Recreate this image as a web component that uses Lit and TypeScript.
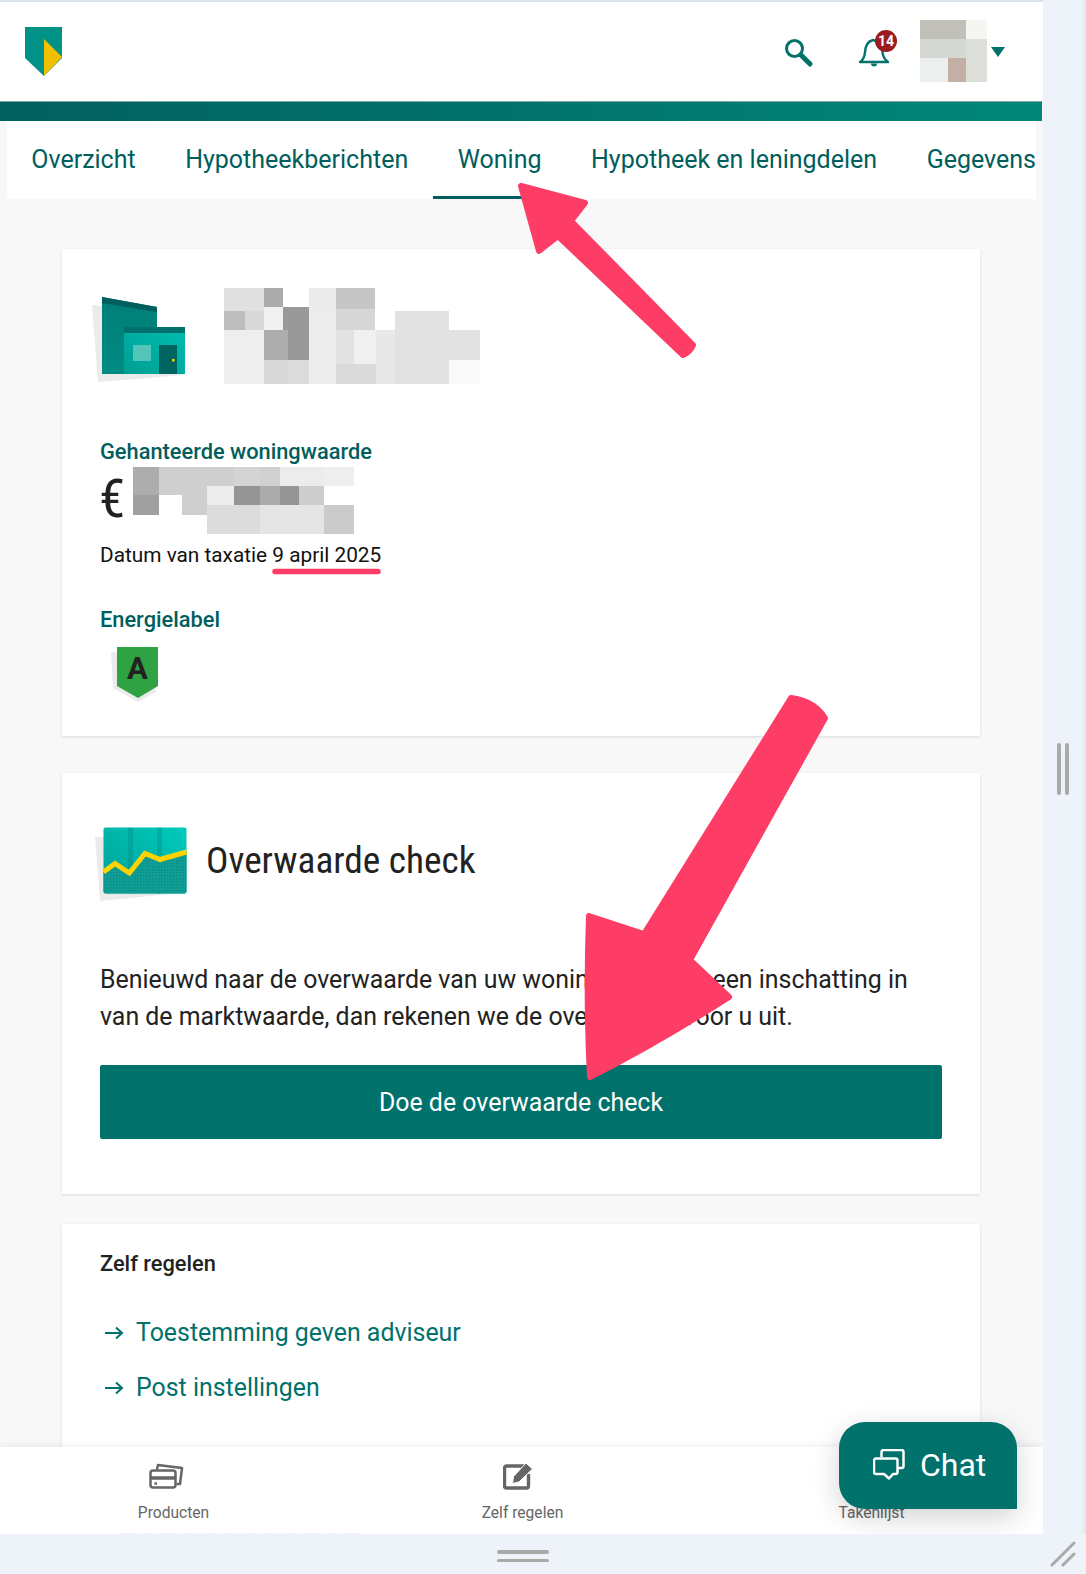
import { LitElement, html, svg, css } from 'lit';
import { customElement } from 'lit/decorators.js';

type Block = [number, number, number, number, string];

const NAME_BLOCKS: Block[] = [
  [0, 0, 40, 23, '#e0e0e0'], [40, 0, 19, 19, '#ababab'], [85, 0, 27, 23, '#ebebeb'], [112, 0, 39, 21, '#c6c6c6'],
  [0, 23, 21, 19, '#bdbdbd'], [21, 23, 19, 19, '#d8d8d8'], [40, 19, 19, 23, '#f0f0f0'], [59, 19, 26, 23, '#999999'],
  [85, 23, 27, 96, '#ededed'], [112, 21, 39, 21, '#d6d6d6'], [171, 23, 54, 19, '#e2e2e2'],
  [0, 42, 40, 54, '#eeeeee'], [40, 42, 24, 30, '#adadad'], [64, 42, 21, 30, '#999999'],
  [112, 42, 18, 34, '#e2e2e2'], [130, 42, 22, 34, '#f0f0f0'], [152, 42, 19, 54, '#e8e8e8'],
  [171, 42, 54, 54, '#e2e2e2'], [225, 42, 31, 30, '#e2e2e2'], [225, 72, 31, 24, '#fafafa'],
  [40, 72, 24, 24, '#d8d8d8'], [64, 72, 21, 24, '#dcdcdc'], [112, 76, 40, 20, '#dadada'],
];

const AMOUNT_BLOCKS: Block[] = [
  [0, 0, 26, 28, '#adadad'], [0, 28, 26, 20, '#a0a0a0'], [26, 0, 75, 19, '#cfcfcf'], [101, 0, 26, 19, '#d4d4d4'],
  [127, 0, 20, 19, '#d0d0d0'], [147, 0, 44, 19, '#ececec'], [191, 0, 30, 19, '#efefef'],
  [26, 19, 48, 9, '#cfcfcf'], [49, 28, 25, 20, '#cfcfcf'],
  [74, 19, 27, 19, '#ececec'], [101, 19, 26, 19, '#959595'], [127, 19, 20, 19, '#ababab'],
  [147, 19, 19, 19, '#959595'], [166, 19, 25, 19, '#cdcdcd'],
  [74, 38, 53, 29, '#dcdcdc'], [127, 38, 64, 29, '#e5e5e5'], [191, 38, 30, 29, '#cbcbcb'],
];

const AVATAR_BLOCKS: Block[] = [
  [0, 0, 46, 19, '#c1c0b8'], [46, 0, 21, 19, '#f5f5f2'], [0, 19, 46, 19, '#d5d8d2'], [46, 19, 21, 43, '#dcdfd7'],
  [0, 38, 28, 24, '#ebefed'], [28, 38, 18, 24, '#c1b0a3'],
];

const mosaic = (blocks: Block[], w: number, h: number) => html`
  <svg width=${w} height=${h} viewBox="0 0 ${w} ${h}" shape-rendering="crispEdges">
    ${blocks.map(([x, y, bw, bh, fill]) => svg`<rect x=${x} y=${y} width=${bw} height=${bh} fill=${fill}></rect>`)}
  </svg>
`;

const TABS = ['Overzicht', 'Hypotheekberichten', 'Woning', 'Hypotheek en leningdelen', 'Gegevens'];

@customElement('app-root')
export class AppRoot extends LitElement {
  static styles = css`
    :host {
      display: block;
      width: 1086px;
      height: 1574px;
      overflow: hidden;
      background: #edf3f9;
      font-family: Roboto, 'Noto Sans', sans-serif;
      color: #222;
    }
    .window {
      display: flex;
      height: 1534px;
    }
    .page {
      position: relative;
      width: 1043px;
      flex: none;
      display: flex;
      flex-direction: column;
      overflow: hidden;
      background: #f8f8f8;
      border-top: 2px solid #d8e2e9;
      box-sizing: border-box;
    }
    .side {
      flex: 1;
      display: flex;
      justify-content: center;
      align-items: center;
      gap: 4px;
      padding-top: 4px;
      border-right: 3px solid #e0eaf1;
    }
    .side span {
      width: 4px;
      height: 52px;
      border-radius: 2px;
      background: #a9a9a9;
    }
    .bottom {
      position: relative;
      height: 40px;
      display: flex;
      flex-direction: column;
      align-items: center;
      padding: 16px 40px 0 0;
      gap: 5px;
      box-sizing: border-box;
    }
    .bottom span {
      width: 52px;
      height: 3.5px;
      border-radius: 2px;
      background: #a9a9a9;
    }
    .resize {
      position: absolute;
      right: 10px;
      top: 7px;
    }

    header {
      height: 99px;
      flex: none;
      display: flex;
      align-items: center;
      background: #fff;
      padding-left: 25px;
      box-sizing: border-box;
    }
    .tools {
      margin-left: auto;
      display: flex;
      align-items: center;
    }
    .search {
      margin-right: 43px;
      margin-top: 3px;
    }
    .bell {
      position: relative;
      width: 32px;
      height: 30px;
      margin-right: 30px;
      margin-top: 3px;
    }
    .badge {
      position: absolute;
      left: 17px;
      top: -8px;
      width: 22px;
      height: 22px;
      border-radius: 50%;
      background: #9b1c1f;
      color: #fff;
      font-size: 14px;
      font-weight: 700;
      line-height: 22px;
      text-align: center;
    }
    .avatar {
      display: block;
      height: 62px;
      margin-top: -1px;
    }
    .caret {
      margin: 0 38px 0 4px;
    }
    .bar {
      height: 20px;
      flex: none;
      margin-right: 1px;
      background: linear-gradient(95deg, #02605e 0%, #01877a 100%);
      border-top: 1px solid #7fa9a8;
      box-sizing: border-box;
    }
    nav.tabs {
      height: 78px;
      flex: none;
      margin: 0 7px;
      display: flex;
      overflow: hidden;
      background: #fff;
    }
    .tab {
      padding: 0 25px 2px 24.5px;
      height: 78px;
      box-sizing: border-box;
      display: flex;
      align-items: center;
      font-size: 25px;
      white-space: nowrap;
      color: #005e5d;
    }
    .tab:first-child {
      padding-left: 24.25px;
    }
    .tab.active {
      box-shadow: inset 0 -3px 0 #005e5d;
    }
    main {
      flex: 1;
      min-height: 0;
      overflow: hidden;
      padding: 50px 63px 0 62px;
      display: flex;
      flex-direction: column;
    }
    .card {
      flex: none;
      background: #fff;
      box-shadow: 0 1px 3px rgba(0, 0, 0, 0.12);
      padding: 39px 38px 0;
      box-sizing: border-box;
    }
    .home {
      height: 487px;
    }
    .address {
      display: flex;
      margin-left: -8px;
    }
    .label {
      font-size: 21.8px;
      font-weight: 500;
      line-height: 28px;
      color: #005e5d;
    }
    .value-label {
      margin-top: 54px;
    }
    .amount {
      display: flex;
      align-items: flex-start;
      height: 67px;
      margin-top: 1px;
    }
    .euro {
      width: 34px;
      margin-left: -1px;
      font-size: 53px;
      line-height: 64px;
      font-weight: 400;
      font-stretch: 75%;
    }
    .date {
      font-size: 20.8px;
      line-height: 26px;
      margin-top: 8px;
      color: #111;
    }
    .energy-label {
      margin-top: 38px;
    }
    .shield {
      display: block;
      margin-top: 12px;
      margin-left: 10px;
    }
    .check {
      margin-top: 37px;
      height: 421px;
      padding-top: 54px;
    }
    .check-head {
      display: flex;
      align-items: center;
      gap: 19px;
      margin-left: -5px;
    }
    h2 {
      margin: 0 0 8px;
      font-size: 37.3px;
      font-weight: 400;
      font-stretch: 75%;
      color: #222;
      white-space: nowrap;
    }
    .check p {
      margin: 60px 0 0;
      font-size: 24.9px;
      line-height: 37px;
      color: #222;
    }
    button {
      display: block;
      width: 100%;
      height: 74px;
      margin-top: 30px;
      border: 0;
      border-radius: 2px;
      background: #00716b;
      color: #fff;
      font: 400 24.9px Roboto, sans-serif;
    }
    .self {
      margin-top: 30px;
      height: 300px;
      padding-top: 26px;
    }
    .self h3 {
      margin: 0 0 27px;
      font-size: 21.8px;
      line-height: 28px;
      font-weight: 500;
      color: #222;
    }
    .link {
      display: flex;
      align-items: center;
      gap: 12px;
      height: 55px;
      margin-left: 4px;
      font-size: 24.9px;
      color: #00716b;
    }
    .tabbar {
      position: absolute;
      left: 0;
      right: 0;
      bottom: 0;
      height: 87px;
      display: grid;
      grid-template-columns: repeat(3, 349px);
      margin-left: -1px;
      background: #fff;
      box-shadow: 0 -2px 6px rgba(0, 0, 0, 0.06);
    }
    .tabbar::after {
      content: '';
      position: absolute;
      left: 120px;
      bottom: 0;
      width: 242px;
      border-bottom: 1px dashed #eef2f5;
    }
    .tabbar div {
      display: flex;
      flex-direction: column;
      align-items: center;
      padding-top: 16px;
      box-sizing: border-box;
      color: #666;
      font-size: 15.6px;
    }
    .tabbar .cap {
      height: 27px;
      margin: 0 14px 14px 0;
    }
    .tabbar .cap.pen {
      margin-right: 10px;
    }
    .chat {
      position: absolute;
      left: 839px;
      top: 1420px;
      width: 178px;
      height: 87px;
      display: flex;
      align-items: center;
      gap: 15px;
      padding: 0 0 2px 34px;
      box-sizing: border-box;
      border-radius: 26px 26px 0 26px;
      background: #00716b;
      color: #fff;
      font-size: 32px;
      box-shadow: 0 8px 28px rgba(0, 0, 0, 0.18);
    }
    .marks {
      position: absolute;
      left: 0;
      top: 0;
      pointer-events: none;
    }
  `;

  render() {
    return html`
      <div class="window">
        <div class="page">
          <header>
            <svg width="38" height="50" viewBox="0 0 38 50">
              <path d="M0 0H37V31L19 49L0 31Z" fill="#009286"></path>
              <path d="M19 12L37 30L19 49Z" fill="#f3c000"></path>
            </svg>
            <div class="tools">
              <svg class="search" width="32" height="32" viewBox="0 0 32 32" fill="none" stroke="#00716b">
                <circle cx="11.5" cy="11.5" r="8" stroke-width="3"></circle>
                <path d="M18 18L27 27" stroke-width="5" stroke-linecap="round"></path>
              </svg>
              <div class="bell">
                <svg width="32" height="30" viewBox="0 0 32 30" fill="none" stroke="#00716b" stroke-width="2.4">
                  <path d="M2 24C5 22 6.500 20 7 14C7.500 7 11 3 15 2C21 3 24 8 24.500 14C25 20 27 22 30 24Z" stroke-linejoin="round"></path>
                  <path d="M13 25.500a3 3 0 0 0 6 0Z" fill="#00716b" stroke="none"></path>
                </svg>
                <span class="badge">14</span>
              </div>
              <span class="avatar">${mosaic(AVATAR_BLOCKS, 67, 62)}</span>
              <svg class="caret" width="14" height="10" viewBox="0 0 14 10">
                <path d="M0 0H14L7 10Z" fill="#00716b"></path>
              </svg>
            </div>
          </header>
          <div class="bar"></div>
          <nav class="tabs">
            ${TABS.map((t) => html`<div class="tab ${t === 'Woning' ? 'active' : ''}">${t}</div>`)}
          </nav>
          <main>
            <section class="card home">
              <div class="address">
                <svg width="132" height="96" viewBox="0 0 132 96">
                  <defs>
                    <linearGradient id="tower" x1="0" y1="0" x2="0" y2="1">
                      <stop offset="0" stop-color="#007d76"></stop>
                      <stop offset="1" stop-color="#008c83"></stop>
                    </linearGradient>
                    <linearGradient id="front" x1="0" y1="1" x2="1" y2="0">
                      <stop offset="0" stop-color="#009e93"></stop>
                      <stop offset="1" stop-color="#00bdb0"></stop>
                    </linearGradient>
                  </defs>
                  <path d="M0 17L6 94L93 87L40 20Z" fill="#ebebeb"></path>
                  <path d="M10 9L65 19V86H10Z" fill="url(#tower)"></path>
                  <path d="M10 9L65 19V24L10 15Z" fill="#005f5d"></path>
                  <rect x="32" y="39" width="61" height="47" fill="url(#front)"></rect>
                  <rect x="32" y="39" width="61" height="6" fill="#00706c"></rect>
                  <rect x="41" y="57" width="18" height="16" fill="#52c4b8"></rect>
                  <rect x="67" y="57" width="18" height="29" fill="#006460"></rect>
                  <rect x="80" y="71" width="2.600" height="2.400" fill="#ffd200"></rect>
                </svg>
                ${mosaic(NAME_BLOCKS, 256, 96)}
              </div>
              <div class="label value-label">Gehanteerde woningwaarde</div>
              <div class="amount">
                <span class="euro">€</span>
                ${mosaic(AMOUNT_BLOCKS, 221, 67)}
              </div>
              <div class="date">Datum van taxatie 9 april 2025</div>
              <div class="label energy-label">Energielabel</div>
              <svg class="shield" width="50" height="56" viewBox="0 0 50 56">
                <path d="M1 6L3 42L28 56L46 46L40 6Z" fill="#ebebeb"></path>
                <path d="M7 1H48V40L28 52L7 40Z" fill="#2fa344"></path>
                <text x="27.500" y="33" text-anchor="middle" font-family="Roboto, sans-serif" font-weight="700" font-size="31" fill="#222">A</text>
              </svg>
            </section>

            <section class="card check">
              <div class="check-head">
                <svg width="92" height="74" viewBox="0 0 92 74">
                  <defs>
                    <linearGradient id="sky" x1="0" y1="1" x2="1" y2="0">
                      <stop offset="0" stop-color="#00a096"></stop>
                      <stop offset="1" stop-color="#00cbbd"></stop>
                    </linearGradient>
                    <pattern id="dots" width="3" height="3" patternUnits="userSpaceOnUse">
                      <rect width="3" height="3" fill="#0f9f97"></rect>
                      <rect width="1.500" height="1.500" fill="#0a8c86"></rect>
                    </pattern>
                  </defs>
                  <path d="M0 10L5 74L85 66L50 10Z" fill="#ebebeb"></path>
                  <rect x="8.500" y="0.500" width="83" height="66" rx="2" fill="url(#sky)"></rect>
                  <rect x="33" y="0.500" width="5" height="66" fill="#00756f" opacity="0.25"></rect>
                  <rect x="62" y="0.500" width="5" height="66" fill="#00756f" opacity="0.25"></rect>
                  <path d="M8.500 45L20 36.500L34.300 46L50 26.500L65 32.500L91.500 25V64.500a2 2 0 0 1 -2 2H10.500a2 2 0 0 1 -2 -2Z" fill="url(#dots)"></path>
                  <path d="M8.500 45L20 36.500L34.300 46L50 26.500L65 32.500L91.500 25" fill="none" stroke="#ffd200" stroke-width="5"></path>
                </svg>
                <h2>Overwaarde check</h2>
              </div>
              <p>Benieuwd naar de overwaarde van uw woning? Geef nu een inschatting in van de marktwaarde, dan rekenen we de overwaarde voor u uit.</p>
              <button>Doe de overwaarde check</button>
            </section>

            <section class="card self">
              <h3>Zelf regelen</h3>
              ${['Toestemming geven adviseur', 'Post instellingen'].map(
                (l) => html`
                  <div class="link">
                    <svg width="20" height="16" viewBox="0 0 20 16" fill="none" stroke="#00716b" stroke-width="2">
                      <path d="M1 8H18M12 2.500L18 8L12 13.500"></path>
                    </svg>
                    ${l}
                  </div>
                `
              )}
            </section>
          </main>

          <div class="tabbar">
            <div>
              <svg class="cap" width="35" height="27" viewBox="0 0 35 27" fill="none" stroke="#666" stroke-width="2.500" stroke-linejoin="round">
                <path d="M8 6.500L9 2L33 5L31 21L27.500 21"></path>
                <rect x="1.500" y="7.500" width="25" height="17" rx="2.500"></rect>
                <path d="M1.500 15H26.500" stroke-width="3.500"></path>
                <path d="M5.500 20.500H8"></path>
              </svg>
              Producten
            </div>
            <div>
              <svg class="cap pen" width="30" height="27" viewBox="0 0 30 27" fill="none">
                <path d="M23 3H3.500a2 2 0 0 0 -2 2V23a2 2 0 0 0 2 2H23.500a2 2 0 0 0 2 -2V11" stroke="#666" stroke-width="3.400"></path>
                <path d="M23 0L29.500 6L16 19L9.500 20.500L10.500 13.500Z" fill="#666" stroke="#fff" stroke-width="1"></path>
              </svg>
              Zelf regelen
            </div>
            <div>
              <div class="cap"></div>
              Takenlijst
            </div>
          </div>
          <div class="chat">
            <svg width="32" height="32" viewBox="0 0 32 32" fill="none" stroke="#fff" stroke-width="2.500" stroke-linejoin="round">
              <path d="M8.500 8V3a2 2 0 0 1 2 -2H28.500a2 2 0 0 1 2 2V17a2 2 0 0 1 -2 2H25"></path>
              <path d="M3 9.500H22.500a2 2 0 0 1 2 2V23a2 2 0 0 1 -2 2H20L16 29.500L11 25H3a2 2 0 0 1 -2 -2V11.500a2 2 0 0 1 2 -2Z"></path>
            </svg>
            Chat
          </div>
          <svg class="marks" width="1043" height="1532" viewBox="0 2 1043 1532">
            <g fill="#fe3d66" stroke="#fe3d66" stroke-width="6" stroke-linejoin="round">
              <path d="M521 186L585 203L571 221L693 345Q690 352 683 355L558 236L539 251Z"></path>
              <path d="M791 698C806 700 818 707 825 718L690 960L729 997C690 1022 640 1052 590 1077C587 1020 587 970 589 916L644 934Z"></path>
            </g>
            <path d="M275 571.500H378" stroke="#fe3d66" stroke-width="5.500" stroke-linecap="round"></path>
          </svg>
        </div>
        <div class="side"><span></span><span></span></div>
      </div>
      <div class="bottom">
        <span></span><span></span>
        <svg class="resize" width="26" height="26" viewBox="0 0 26 26" stroke="#a9a9a9" stroke-width="3" stroke-linecap="round">
          <path d="M2 24L24 2M13 24L24 13"></path>
        </svg>
      </div>
    `;
  }
}
